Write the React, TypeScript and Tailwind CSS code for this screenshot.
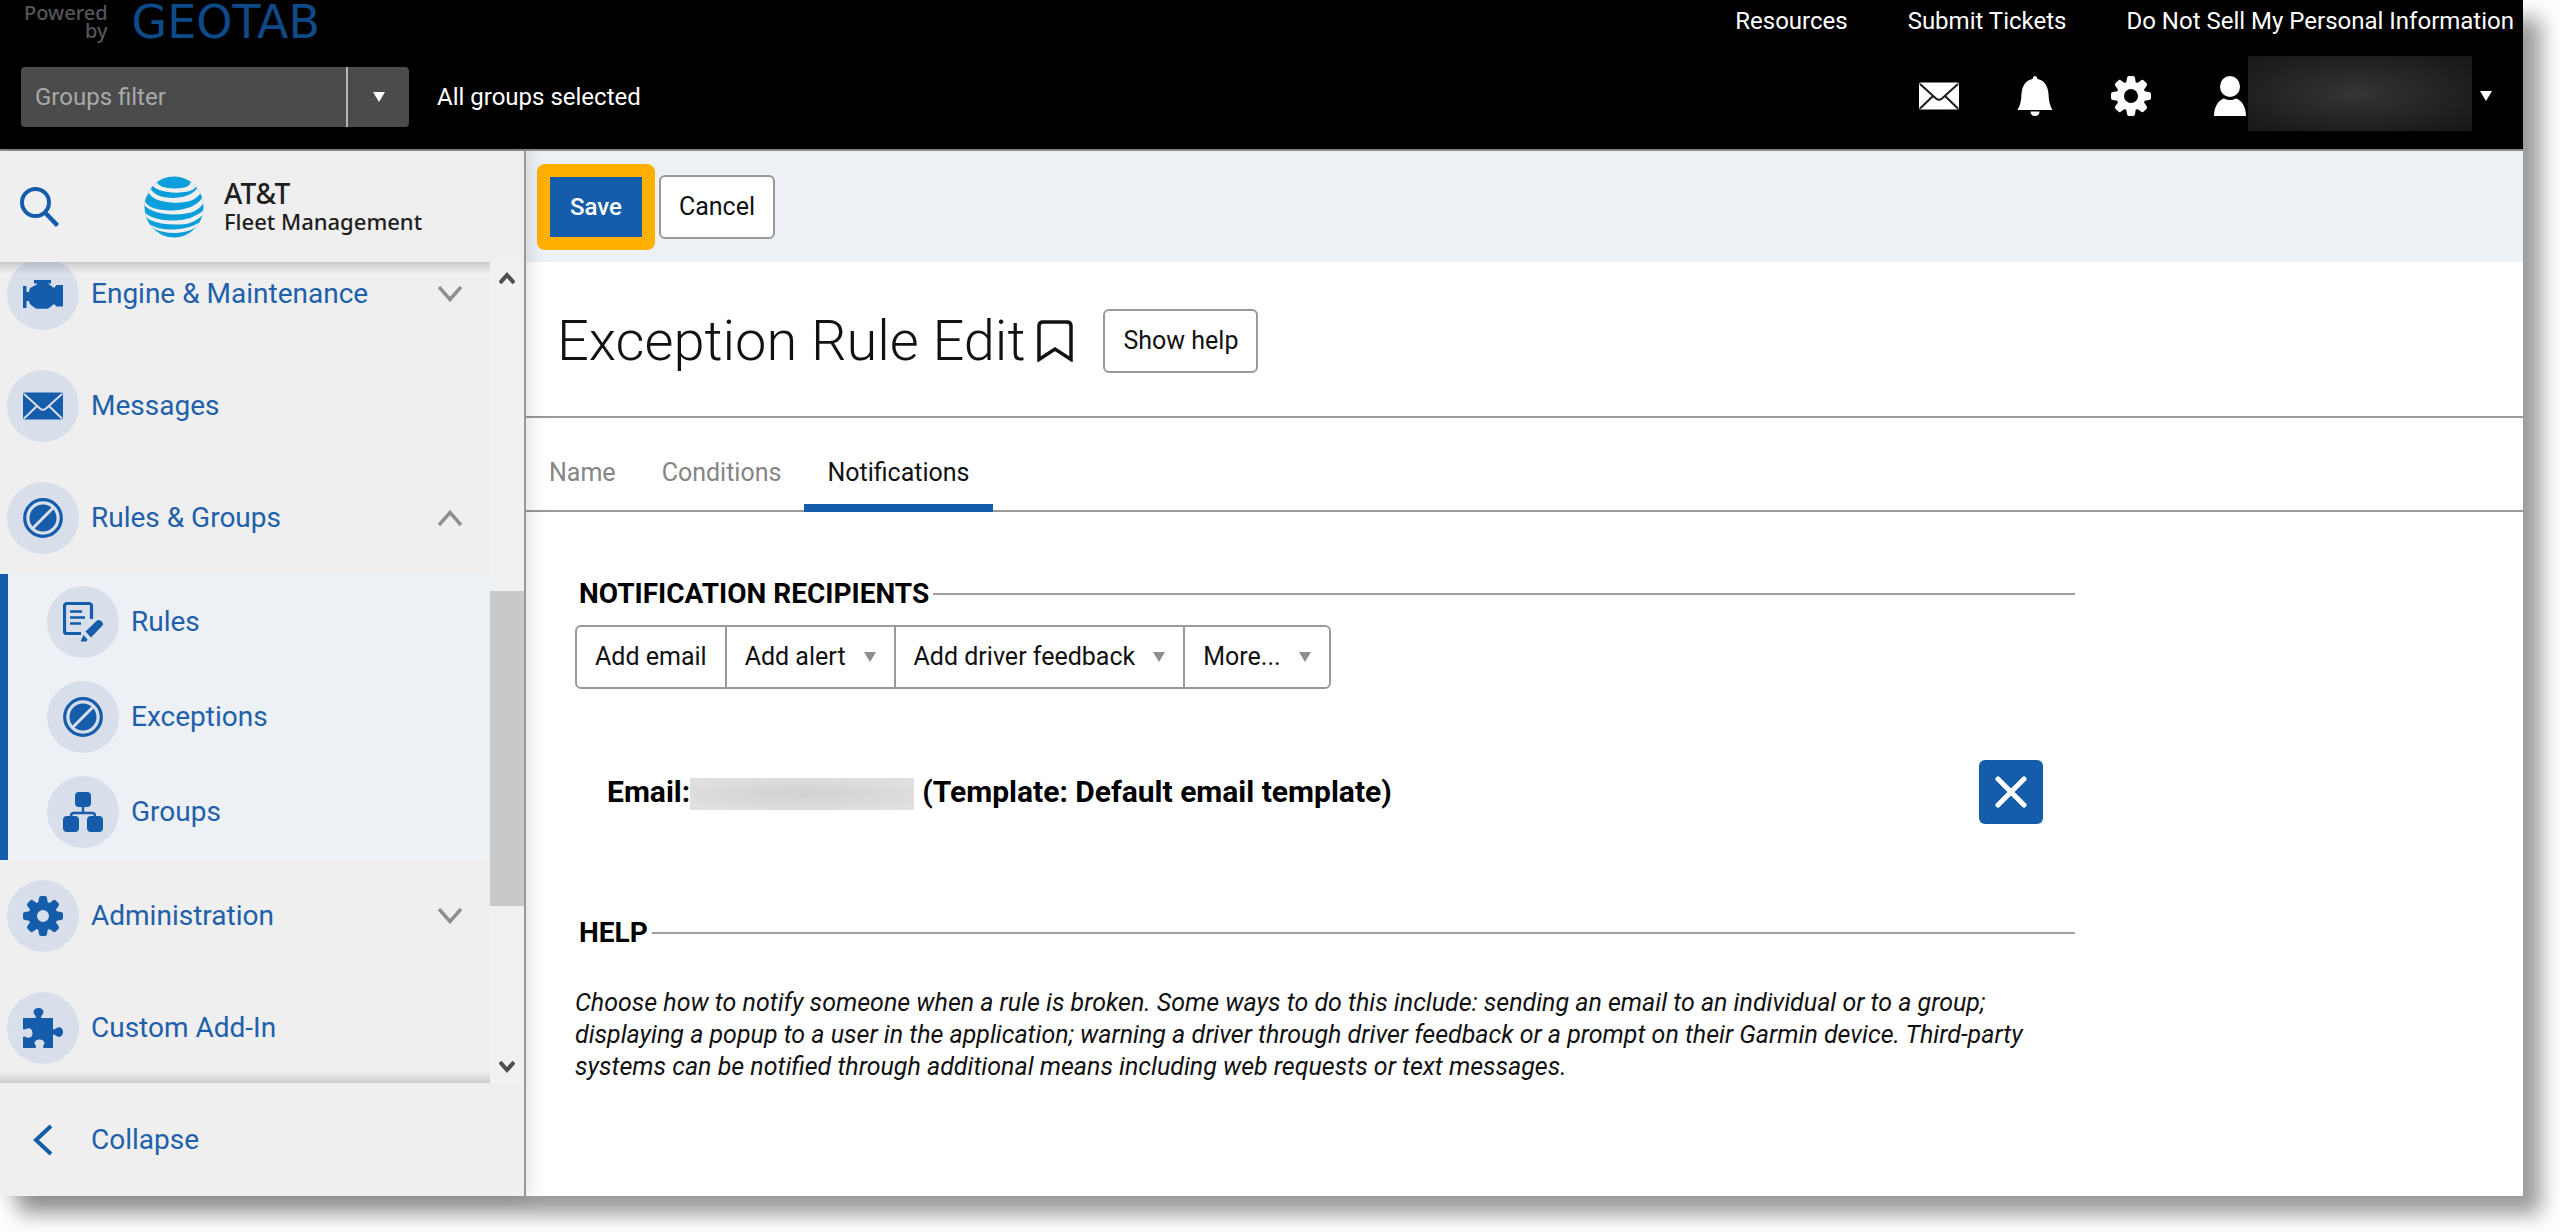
import { useState } from 'react';
import type { ReactNode } from 'react';
import clsx from 'clsx';

function SearchIcon() {
    return (
        <svg className="w-10 h-10" viewBox="0 0 40 40" fill="none" stroke="#155caa" strokeWidth="4">
            <circle cx="15.5" cy="15.5" r="13.5" />
            <path d="M25 25.5L37.5 38.5" strokeWidth="4.5" />
        </svg>
    );
}

function GlobeLogo() {
    return (
        <svg className="w-[60px] h-[62px] shrink-0" viewBox="0 0 60 62">
            <clipPath id="globe">
                <ellipse cx="30" cy="31" rx="29.5" ry="30.5" />
            </clipPath>
            <g clipPath="url(#globe)">
                <rect width="60" height="62" fill="#0a9fdb" />
                <g fill="#efefef">
                    <path d="M5 2L13 6Q15 12 30 12.500T47 6L56 3Q54 13 44 15.500Q36 17 28 16.500Q12 15 8 9z" />
                    <path d="M0 16Q5 9 6 11Q10 22 30 22Q48 21 54 11L60 10Q57 21 46 25Q38 27.500 27 26.500Q9 25 5 17Q3 20 0 24z" />
                    <path d="M0 24Q5 35 29 34.500Q51 33 58 22L62 22Q58 33 47 36.500Q38 39 27 38.500Q8 37 1 30z" />
                    <path d="M-1 35Q8 45 30 44.500Q50 44 61 33L61 37Q52 46 42 48Q20 50 6 44Q2 41 -1 38z" />
                    <path d="M5 48Q14 54 30 53.500Q46 53 56 46L54 50Q46 56 32 57Q16 57 7 51z" />
                </g>
            </g>
        </svg>
    );
}

function EngineIcon() {
    return (
        <svg className="w-10 h-10" viewBox="0 0 40 40" fill="#155caa">
            <path d="M0 12h3.500v6H6q0-4 3-5l4-2 1.500-1.500H11V6h17v3.500h-3l2 1.500 4 3 2.500-3H40v21.500h-6.500L31 30l-5 4q-1 .7-2 .7H14q-1 0-2-.7l-4-3q-2-1.500-2-4H3.500v7H0z" />
        </svg>
    );
}

function MailIcon({ fill, line }: { fill: string; line: string }) {
    return (
        <svg className="w-10 h-10" viewBox="0 0 40 40">
            <rect x="0" y="6.500" width="40" height="27" rx="2" fill={fill} />
            <path d="M1 8l16 14.500c2 1.700 4 1.700 6 0L39 8M1 32.500L14 20M39 32.500L26 20" fill="none" stroke={line} strokeWidth="2" />
        </svg>
    );
}

function BanIcon() {
    return (
        <svg className="w-10 h-10" viewBox="0 0 40 40">
            <circle cx="20" cy="20" r="18.300" fill="none" stroke="#155caa" strokeWidth="3.200" />
            <circle cx="20" cy="20" r="13.500" fill="#155caa" />
            <path d="M9 31L31 9" stroke="#d8deea" strokeWidth="3" />
        </svg>
    );
}

function RulesIcon() {
    return (
        <svg className="w-10 h-10" viewBox="0 0 40 40" fill="none" stroke="#155caa">
            <path d="M28.500 17V4a2.500 2.500 0 0 0-2.500-2.500H4A2.500 2.500 0 0 0 1.500 4v25A2.500 2.500 0 0 0 4 31.500h14" strokeWidth="3.200" />
            <path d="M7 9.500h12M7 15.500h15M7 21.500h11" strokeWidth="2.400" />
            <path d="M22.500 29.500L34 18.500l1.500-.5c1.500-.5 5 2.500 4.500 4.500L39 24 28 35.500z" fill="#155caa" stroke="none" />
            <path d="M20.500 33l4 4.500-1 2h-6z" fill="#155caa" stroke="none" />
        </svg>
    );
}

function GroupsIcon() {
    return (
        <svg className="w-10 h-10" viewBox="0 0 40 40" fill="#155caa">
            <rect x="12" y="0" width="16" height="15" rx="4" />
            <rect x="0" y="24" width="16" height="16" rx="4" />
            <rect x="24" y="24" width="16" height="16" rx="4" />
            <path d="M20 14v7M8 26v-2c0-2 1-3 3-3h18c2 0 3 1 3 3v2" fill="none" stroke="#155caa" strokeWidth="2.500" />
        </svg>
    );
}

function GearIcon({ color, hole }: { color: string; hole: number }) {
    const ring = 14.5 - hole;
    return (
        <svg className="w-10 h-10" viewBox="0 0 40 40">
            <circle cx="20" cy="20" r={hole + ring / 2} fill="none" stroke={color} strokeWidth={ring} />
            {[0, 45, 90, 135, 180, 225, 270, 315].map((angle) => (
                <path key={angle} d="M15 8l1-6q.2-2 2-2h4q1.800 0 2 2l1 6z" fill={color} transform={`rotate(${angle} 20 20)`} />
            ))}
        </svg>
    );
}

function PuzzleIcon() {
    return (
        <svg className="w-10 h-10" viewBox="0 0 40 40" fill="#155caa">
            <path d="M0 10h12.500c1-1 0-2-1-3.500C9 3 12 0 15.500 0s6.500 3 4 6.500c-1 1.500-2 2.500-1 3.500H30v11c1 1 2 0 3.500-1 3.500-2 6.500.5 6.500 4s-3 6.500-6.500 4C32 27 31 26 30 27v13H20.500c-1-1-.5-2 .5-3.500 1.500-3-1.500-5-4.500-5s-6 2-4.500 5c1 1.500 1.500 2.500.5 3.500H0V29c1-1 2-.5 3.500.3C7 31 9.500 28.500 9.500 25S7 19 3.500 20.700C2 21.500 1 22 0 21z" />
        </svg>
    );
}

function Chevron({ up = false }: { up?: boolean }) {
    return (
        <svg className="w-6 h-4 shrink-0" viewBox="0 0 24 16" fill="none" stroke="#8e8e8e" strokeWidth="3.500">
            <path d={up ? 'M1 15L12 2.500 23 15' : 'M1 1l11 12.500L23 1'} />
        </svg>
    );
}

function Caret({ className }: { className: string }) {
    return (
        <svg className={clsx('w-3 h-[10px] shrink-0', className)} viewBox="0 0 12 10" fill="currentColor">
            <path d="M0 0h12L6 10z" />
        </svg>
    );
}

function Bubble({ children }: { children: ReactNode }) {
    return (
        <span className="flex items-center justify-center w-[72px] h-[72px] rounded-full bg-[#d8deea] shrink-0">
            {children}
        </span>
    );
}

const subItems = [
    { label: 'Rules', icon: <RulesIcon /> },
    { label: 'Exceptions', icon: <BanIcon /> },
    { label: 'Groups', icon: <GroupsIcon /> },
];

function NavItem({ label, icon, children }: { label: string; icon: ReactNode; children?: ReactNode }) {
    return (
        <a href="#" className="flex items-center h-28 pl-[7px] pr-7 gap-3">
            <Bubble>{icon}</Bubble>
            <span className="flex-1">{label}</span>
            {children}
        </a>
    );
}

function Header() {
    return (
        <header className="flex justify-between bg-black border-b-2 border-[#8a8a8a] text-white text-2xl">
            <div>
                <div className="flex h-11 pl-6 gap-6">
                    <p className="pt-1 text-right text-xl leading-[18px] font-medium text-[#55555a] font-['Noto_Sans',sans-serif]">
                        Powered
                        <br />
                        by
                    </p>
                    <p className="text-[46px] leading-[44px] text-[#0e4a87] font-['DejaVu_Sans',sans-serif]">GEOTAB</p>
                </div>
                <div className="flex items-center h-[105px] pl-[21px] gap-7">
                    <div className="flex h-[60px] w-[388px] rounded bg-[#4b4b4b] overflow-hidden">
                        <input
                            type="text"
                            aria-label="Groups filter"
                            placeholder="Groups filter"
                            className="flex-1 min-w-0 px-[14px] placeholder:text-[#a9a9a9] outline-none"
                        />
                        <button aria-label="Open groups filter" className="flex items-center justify-center w-[63px] border-l-2 border-[#b5b5b5]">
                            <Caret className="text-white" />
                        </button>
                    </div>
                    <span>All groups selected</span>
                </div>
            </div>
            <div className="flex flex-col items-end">
                <nav className="flex items-center h-[42px] gap-[60px] pr-[9px]">
                    <a href="#">Resources</a>
                    <a href="#">Submit Tickets</a>
                    <a href="#">Do Not Sell My Personal Information</a>
                </nav>
                <div className="flex items-center h-[107px] gap-14 pr-[31px]">
                    <button aria-label="Mail">
                        <MailIcon fill="#ffffff" line="#1a1a1a" />
                    </button>
                    <button aria-label="Alerts">
                        <svg className="w-10 h-10" viewBox="0 0 40 40" fill="#ffffff">
                            <path d="M20 0c1.500 0 2 1.500 2.500 3 7 1.500 10.500 7 11 15 .3 7 1.500 12 4 16h-35c2.500-4 3.700-9 4-16 .5-8 4-13.500 11-15C18 1.500 18.500 0 20 0z" />
                            <path d="M15.500 35.500h9c0 3-2 4.500-4.500 4.500s-4.500-1.500-4.500-4.500z" />
                        </svg>
                    </button>
                    <button aria-label="Settings">
                        <GearIcon color="#ffffff" hole={7} />
                    </button>
                    <button aria-label="Account" className="flex items-center ml-[7px]">
                        <svg className="w-8 h-10" viewBox="0 0 32 40" fill="#ffffff">
                            <ellipse cx="16" cy="10.500" rx="10" ry="10.500" />
                            <path d="M0 40c0-10 5-16 10-17.500 4 2 8 2 12 0C27 24 32 30 32 40z" />
                        </svg>
                        <span className="w-56 h-[75px] mb-1 ml-[2px] mr-2 bg-radial-[at_48%_50%] from-[#353535] via-[#242424] to-[#171717]" />
                        <Caret className="text-white" />
                    </button>
                </div>
            </div>
        </header>
    );
}

function Sidebar() {
    return (
        <aside className="relative z-10 flex flex-col w-[526px] shrink-0 bg-[#efefef] border-r-2 border-[#999] shadow-[2px_0_18px_rgba(0,0,0,0.15)] text-[28px] text-[#2060aa]">
            <div className="flex items-center h-[111px] pl-5">
                <button aria-label="Search">
                    <SearchIcon />
                </button>
                <div className="flex items-center ml-[84px] gap-5 text-[#1e1e1e] font-['Noto_Sans',sans-serif] font-medium">
                    <GlobeLogo />
                    <p className="flex flex-col">
                        <span className="leading-[28px]">AT&amp;T</span>
                        <span className="text-[22px] leading-[28px]">Fleet Management</span>
                    </p>
                </div>
            </div>
            <div className="flex flex-1 min-h-0">
                <div className="relative flex-1 overflow-hidden">
                    <nav className="-mt-6">
                        <NavItem label="Engine & Maintenance" icon={<EngineIcon />}>
                            <Chevron />
                        </NavItem>
                        <NavItem label="Messages" icon={<MailIcon fill="#155caa" line="#d8deea" />} />
                        <NavItem label="Rules & Groups" icon={<BanIcon />}>
                            <Chevron up />
                        </NavItem>
                        <div className="pb-px border-l-8 border-[#155caa] bg-[#edf1f6]">
                            {subItems.map((item) => (
                                <a key={item.label} href="#" className="flex items-center h-[95px] pl-[39px] gap-3">
                                    <Bubble>{item.icon}</Bubble>
                                    <span>{item.label}</span>
                                </a>
                            ))}
                        </div>
                        <NavItem label="Administration" icon={<GearIcon color="#155caa" hole={6} />}>
                            <Chevron />
                        </NavItem>
                        <NavItem label="Custom Add-In" icon={<PuzzleIcon />} />
                    </nav>
                    {/* scroll shadows */}
                    <div className="absolute inset-x-0 top-0 h-3 bg-linear-to-b from-black/15 to-transparent" />
                    <div className="absolute inset-x-0 bottom-0 h-3 bg-linear-to-t from-black/15 to-transparent" />
                </div>
                <div className="flex flex-col items-center w-[34px] py-2 bg-[#f1f1f1]">
                    <svg className="w-4 h-4 shrink-0" viewBox="0 0 16 16" fill="none" stroke="#505050" strokeWidth="4">
                        <path d="M1 13l7-8 7 8" />
                    </svg>
                    <div className="w-full h-[315px] mt-[305px] bg-[#c9c9c9]" />
                    <svg className="w-4 h-4 mt-auto shrink-0" viewBox="0 0 16 16" fill="none" stroke="#505050" strokeWidth="4">
                        <path d="M1 3l7 8 7-8" />
                    </svg>
                </div>
            </div>
            <button className="flex items-center h-[113px] pl-8 gap-[38px]">
                <svg className="w-[21px] h-8" viewBox="0 0 21 32" fill="none" stroke="#155caa" strokeWidth="4">
                    <path d="M19 2L4 16l15 14" />
                </svg>
                Collapse
            </button>
        </aside>
    );
}

function SectionTitle({ children }: { children: ReactNode }) {
    return (
        <div className="flex items-center gap-1 pl-1">
            <h2 className="text-[28px] leading-8 font-bold text-black">{children}</h2>
            <div className="flex-1 h-[2px] bg-[#a0a0a0]" />
        </div>
    );
}

const tabs = ['Name', 'Conditions', 'Notifications'];

const recipientActions = [
    { label: 'Add email', menu: false },
    { label: 'Add alert', menu: true },
    { label: 'Add driver feedback', menu: true },
    { label: 'More...', menu: true },
];

function Content() {
    const [activeTab, setActiveTab] = useState('Notifications');

    return (
        <main className="flex-1 min-w-0 bg-white text-[25px] text-[#111]">
            <div className="flex items-center h-[111px] pl-[11px] gap-1 bg-[#edf1f6]">
                <button className="h-[86px] px-5 rounded-lg border-[13px] border-[#ffb000] bg-[#155caa] text-2xl font-medium text-white">
                    Save
                </button>
                <button className="h-16 px-[18px] rounded-md border-2 border-[#999] bg-white">Cancel</button>
            </div>

            <div className="flex items-center h-[156px] pt-1 pl-[31px] border-b-2 border-[#999]">
                <h1 className="text-[56px] leading-[64px] font-light">Exception Rule Edit</h1>
                <button aria-label="Bookmark" className="ml-3">
                    <svg className="w-[36px] h-[42px]" viewBox="0 0 36 42" fill="none" stroke="#111" strokeWidth="3.500">
                        <path d="M2 39.500V6q0-4 4-4h24q4 0 4 4v33.500L18 29z" />
                    </svg>
                </button>
                <button className="h-16 px-[18px] ml-[30px] rounded-md border-2 border-[#999]">Show help</button>
            </div>

            <div role="tablist" className="flex h-[94px] border-b-2 border-[#999]">
                {tabs.map((tab) => (
                    <button
                        key={tab}
                        role="tab"
                        aria-selected={tab === activeTab}
                        onClick={() => setActiveTab(tab)}
                        className={clsx(
                            'px-[23px] pt-6 -mb-[2px] border-b-8',
                            tab === activeTab ? 'border-[#155caa] text-[#111]' : 'border-transparent text-[#858585]'
                        )}
                    >
                        {tab}
                    </button>
                ))}
            </div>

            <div className="pl-[49px] pr-6 pt-[66px]">
                <section className="max-w-[1500px]">
                    <SectionTitle>NOTIFICATION RECIPIENTS</SectionTitle>
                    <div className="inline-flex h-16 mt-[15px] rounded-md border-2 border-[#999] divide-x-2 divide-[#999]">
                        {recipientActions.map((action) => (
                            <button key={action.label} className="flex items-center px-[18px] gap-[18px]">
                                {action.label}
                                {action.menu && <Caret className="text-[#8e8e8e]" />}
                            </button>
                        ))}
                    </div>
                    <div className="flex items-center justify-between mt-[71px] px-8">
                        <p className="flex items-center text-3xl font-bold text-black">
                            Email:
                            <span className="w-56 h-8 mt-1 mr-2 bg-radial-[at_50%_50%] from-[#d2d2d2] to-[#e2e2e2]" />
                            (Template: Default email template)
                        </p>
                        <button aria-label="Remove recipient" className="flex items-center justify-center w-16 h-16 rounded-md bg-[#155caa]">
                            <svg className="w-8 h-8" viewBox="0 0 32 32" stroke="#ffffff" strokeWidth="5" strokeLinecap="round">
                                <path d="M3 3l26 26M29 3L3 29" />
                            </svg>
                        </button>
                    </div>
                </section>
                <section className="max-w-[1500px] mt-[93px]">
                    <SectionTitle>HELP</SectionTitle>
                    <p className="mt-[38px] leading-8 italic">
                        Choose how to notify someone when a rule is broken. Some ways to do this include: sending an email to an
                        individual or to a group; displaying a popup to a user in the application; warning a driver through driver
                        feedback or a prompt on their Garmin device. Third-party systems can be notified through additional means
                        including web requests or text messages.
                    </p>
                </section>
            </div>
        </main>
    );
}

export default function App() {
    return (
        <div className="h-screen bg-white pr-[37px] pb-9 font-[Roboto,sans-serif]">
            <div className="flex flex-col h-full shadow-[18px_18px_20px_rgba(0,0,0,0.4)]">
                <Header />
                <div className="flex flex-1 min-h-0">
                    <Sidebar />
                    <Content />
                </div>
            </div>
        </div>
    );
}
